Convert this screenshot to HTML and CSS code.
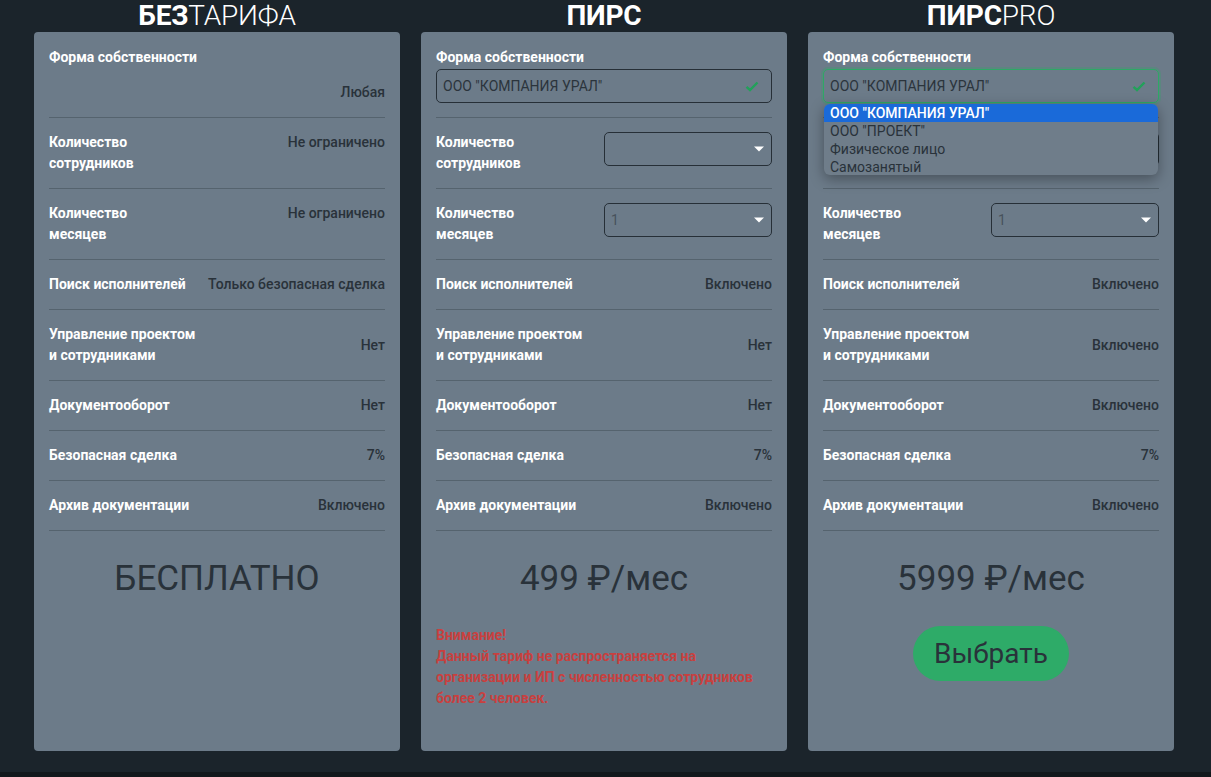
FILE: index.html
```html
<!DOCTYPE html>
<html lang="ru">
<head>
<meta charset="utf-8">
<title>Тарифы</title>
<link rel="stylesheet" href="styles.css">
</head>
<body>
<main class="page">
  <div class="plans">
    <section class="plan">
      <h2 class="title"><b>БЕЗ</b><span>ТАРИФА</span></h2>
      <div class="card">
        <div class="row stack">
          <div class="label">Форма собственности</div>
          <div class="field"><span class="val">Любая</span></div>
        </div>
        <div class="row top">
          <div class="label">Количество<br>сотрудников</div>
          <div class="val">Не ограничено</div>
        </div>
        <div class="row top">
          <div class="label">Количество<br>месяцев</div>
          <div class="val">Не ограничено</div>
        </div>
        <div class="row center">
          <div class="label">Поиск исполнителей</div>
          <div class="val">Только безопасная сделка</div>
        </div>
        <div class="row center">
          <div class="label">Управление проектом<br>и сотрудниками</div>
          <div class="val">Нет</div>
        </div>
        <div class="row center">
          <div class="label">Документооборот</div>
          <div class="val">Нет</div>
        </div>
        <div class="row center">
          <div class="label">Безопасная сделка</div>
          <div class="val">7%</div>
        </div>
        <div class="row center">
          <div class="label">Архив документации</div>
          <div class="val">Включено</div>
        </div>
        <div class="price">БЕСПЛАТНО</div>
      </div>
    </section>

    <section class="plan">
      <h2 class="title"><b>ПИРС</b></h2>
      <div class="card">
        <div class="row stack">
          <div class="label">Форма собственности</div>
          <div class="select wide">
            <span class="sel-text">ООО "КОМПАНИЯ УРАЛ"</span>
            <svg class="check" width="14" height="11" viewBox="0 0 14 11"><polyline points="1.5,5.8 5,9 12.5,1.5" fill="none" stroke="#22a15a" stroke-width="2.4"/></svg>
          </div>
        </div>
        <div class="row top">
          <div class="label">Количество<br>сотрудников</div>
          <div class="select half">
            <span class="sel-text"></span>
            <svg class="caret" width="10" height="6" viewBox="0 0 10 6"><polygon points="0,0.5 10,0.5 5,5.5" fill="#ffffff"/></svg>
          </div>
        </div>
        <div class="row top">
          <div class="label">Количество<br>месяцев</div>
          <div class="select half">
            <span class="sel-text muted">1</span>
            <svg class="caret" width="10" height="6" viewBox="0 0 10 6"><polygon points="0,0.5 10,0.5 5,5.5" fill="#ffffff"/></svg>
          </div>
        </div>
        <div class="row center">
          <div class="label">Поиск исполнителей</div>
          <div class="val">Включено</div>
        </div>
        <div class="row center">
          <div class="label">Управление проектом<br>и сотрудниками</div>
          <div class="val">Нет</div>
        </div>
        <div class="row center">
          <div class="label">Документооборот</div>
          <div class="val">Нет</div>
        </div>
        <div class="row center">
          <div class="label">Безопасная сделка</div>
          <div class="val">7%</div>
        </div>
        <div class="row center">
          <div class="label">Архив документации</div>
          <div class="val">Включено</div>
        </div>
        <div class="price">499 ₽/мес</div>
        <p class="warning">Внимание!<br>Данный тариф не распространяется на организации и ИП с численностью сотрудников более 2 человек.</p>
      </div>
    </section>

    <section class="plan">
      <h2 class="title"><b>ПИРС</b><span>PRO</span></h2>
      <div class="card">
        <div class="row stack">
          <div class="label">Форма собственности</div>
          <div class="select wide focus">
            <span class="sel-text">ООО "КОМПАНИЯ УРАЛ"</span>
            <svg class="check" width="14" height="11" viewBox="0 0 14 11"><polyline points="1.5,5.8 5,9 12.5,1.5" fill="none" stroke="#22a15a" stroke-width="2.4"/></svg>
          </div>
        </div>
        <div class="row top under">
          <div class="label">Количество<br>сотрудников</div>
          <div class="select half">
            <span class="sel-text"></span>
            <svg class="caret" width="10" height="6" viewBox="0 0 10 6"><polygon points="0,0.5 10,0.5 5,5.5" fill="#ffffff"/></svg>
          </div>
        </div>
        <div class="row top">
          <div class="label">Количество<br>месяцев</div>
          <div class="select half">
            <span class="sel-text muted">1</span>
            <svg class="caret" width="10" height="6" viewBox="0 0 10 6"><polygon points="0,0.5 10,0.5 5,5.5" fill="#ffffff"/></svg>
          </div>
        </div>
        <div class="row center">
          <div class="label">Поиск исполнителей</div>
          <div class="val">Включено</div>
        </div>
        <div class="row center">
          <div class="label">Управление проектом<br>и сотрудниками</div>
          <div class="val">Включено</div>
        </div>
        <div class="row center">
          <div class="label">Документооборот</div>
          <div class="val">Включено</div>
        </div>
        <div class="row center">
          <div class="label">Безопасная сделка</div>
          <div class="val">7%</div>
        </div>
        <div class="row center">
          <div class="label">Архив документации</div>
          <div class="val">Включено</div>
        </div>
        <div class="price">5999 ₽/мес</div>
        <button class="btn" type="button">Выбрать</button>

        <ul class="dropdown">
          <li class="opt active">ООО "КОМПАНИЯ УРАЛ"</li>
          <li class="opt">ООО "ПРОЕКТ"</li>
          <li class="opt">Физическое лицо</li>
          <li class="opt">Самозанятый</li>
        </ul>
      </div>
    </section>
  </div>
</main>
<div class="footer-strip"></div>
</body>
</html>
```

FILE: styles.css
```css
* { box-sizing: border-box; }

html, body {
  margin: 0;
  padding: 0;
}

body {
  background: #1b242b;
  font-family: Roboto, "Noto Sans", "Liberation Sans", sans-serif;
  font-size: 14px;
  line-height: 21px;
  overflow: hidden;
}

.page {
  height: 772px;
  padding: 0 37px 21px 34px;
}

.plans {
  display: grid;
  grid-template-columns: repeat(3, 366px);
  column-gap: 21px;
  height: 100%;
}

.plan {
  display: flex;
  flex-direction: column;
  min-height: 0;
}

.title {
  margin: 0;
  height: 32px;
  line-height: 32px;
  font-size: 28px;
  text-align: center;
  color: #ffffff;
  font-weight: 300;
  letter-spacing: -0.2px;
}

.title b {
  font-weight: 700;
}

.title span {
  font-weight: 300;
}

.card {
  position: relative;
  flex: 1;
  background: #6c7b89;
  border-radius: 4px;
  padding: 1px 15px 0;
}

.row {
  display: flex;
  justify-content: space-between;
  padding: 14px 0;
  border-bottom: 1px solid #55636e;
}

.row.stack {
  flex-direction: column;
}

.row.top {
  align-items: flex-start;
}

.row.center {
  align-items: center;
}

.label {
  color: #ffffff;
  font-weight: 700;
}

.row.under .label {
  visibility: hidden;
}

.val {
  color: #29323a;
  font-weight: 500;
  text-align: right;
}

.field {
  height: 34px;
  margin-top: 1px;
  display: flex;
  align-items: flex-end;
  justify-content: flex-end;
}

.select {
  height: 34px;
  border: 1px solid #262f37;
  border-radius: 5px;
  display: flex;
  align-items: center;
  justify-content: space-between;
  padding: 0 7px 0 6px;
  color: #2b343c;
  font-size: 14px;
}

.select.wide {
  margin-top: 1px;
  padding-right: 12px;
}

.select.half {
  width: 168px;
}

.select.focus {
  border-color: #2ea866;
  box-shadow: 0 0 0 2px rgba(46, 168, 102, 0.28);
}

.sel-text.muted {
  color: #47525c;
}

.check { display: block; }
.caret { display: block; }

.price {
  margin-top: 27px;
  text-align: center;
  font-size: 35px;
  line-height: 42px;
  color: #29323a;
  font-weight: 400;
}

.warning {
  margin: 25px 0 0;
  color: #c8403f;
  font-weight: 700;
  font-size: 14px;
  line-height: 21px;
}

.btn {
  display: block;
  margin: 26px auto 0;
  border: 0;
  background: #2eab68;
  border-radius: 28px;
  padding: 11px 21px;
  font-family: inherit;
  font-size: 28px;
  line-height: 33px;
  color: #29323a;
  font-weight: 400;
}

.dropdown {
  position: absolute;
  top: 72px;
  left: 16px;
  width: 334px;
  margin: 0;
  padding: 0;
  list-style: none;
  background: #6f7d8a;
  border-radius: 6px;
  box-shadow: 0 4px 14px rgba(0, 0, 0, 0.35);
  overflow: hidden;
  height: 71px;
}

.opt {
  height: 18px;
  line-height: 18px;
  padding: 0 6px;
  color: #29323a;
  font-size: 14px;
}

.opt.active {
  background: #1a6ad9;
  color: #ffffff;
  font-weight: 500;
}

.footer-strip {
  height: 5px;
  background: #12181c;
}
```
